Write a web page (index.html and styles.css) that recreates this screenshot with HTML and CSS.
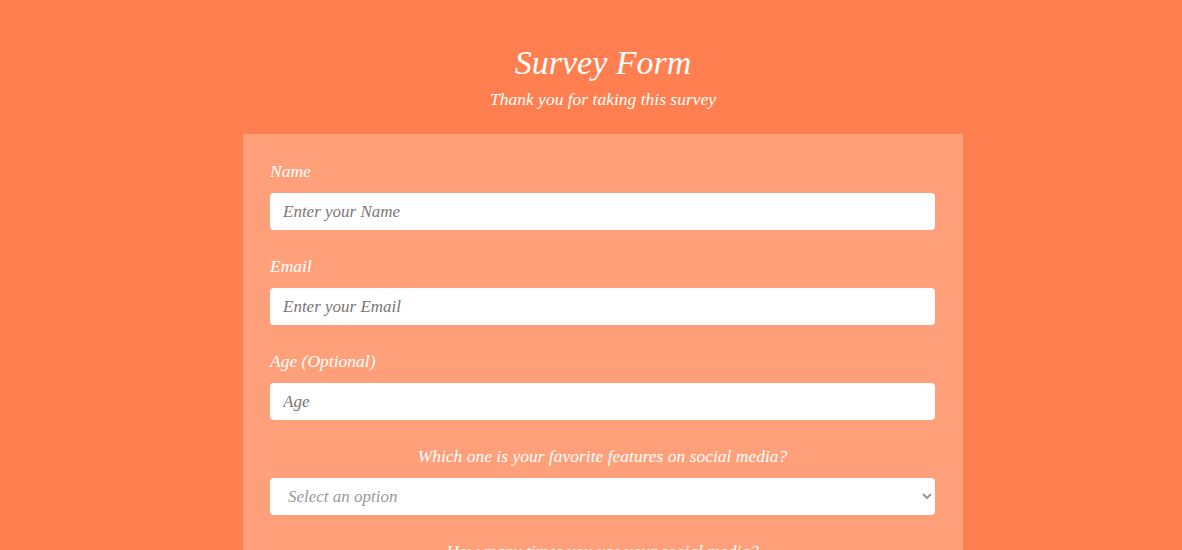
FILE: index.html
```html
<!DOCTYPE html>
<html>
<head>
    <meta charset="utf-8" />
    <link rel="stylesheet" href="styles.css">
</head>
<body>
<header class="head">
    <h1 id="title">Survey Form</h1>
    <p id="description">Thank you for taking this survey</p>
</header>
<form id="survey-form" class="form">
    <div class="group">
        <label for="name" class="label">Name</label>
        <input id="name" class="field" type="text" placeholder="Enter your Name" />
    </div>
    <div class="group">
        <label for="email" class="label">Email</label>
        <input id="email" class="field" type="email" placeholder="Enter your Email" />
    </div>
    <div class="group">
        <label for="number" class="label">Age (Optional)</label>
        <input id="number" class="field" type="number" placeholder="Age" />
    </div>
    <div class="group">
        <p class="label center">Which one is your favorite features on social media?</p>
        <select id="dropdown" class="field select">
            <option value="">Select an option</option>
            <option>Stories</option>
            <option>Reels</option>
            <option>Messages</option>
        </select>
    </div>
    <div class="group">
        <p class="label center">How many times you use your social media?</p>
    </div>
</form>
</body>
</html>
```

FILE: styles.css
```css
body{
    margin: 0;
    padding-left: 24px;
    background-color: #ff7f50;
    font-family: "Liberation Serif", "DejaVu Serif", serif;
    font-style: italic;
    color: white;
}
.head{
    text-align: center;
    padding-top: 41px;
}
#title{
    margin: 0;
    font-size: 34px;
    font-weight: normal;
    line-height: 44px;
}
#description{
    margin: 3px 0 0;
    font-size: 17.5px;
    line-height: 22px;
}
.form{
    width: 665px;
    margin: 24px auto 0;
    padding: 25px 28px 25px 27px;
    background-color: #ffa07a;
}
.group{
    margin-bottom: 24px;
}
.label{
    display: block;
    margin: 0 0 9px;
    font-size: 17.5px;
    line-height: 25px;
}
.center{
    text-align: center;
}
.field{
    display: block;
    box-sizing: border-box;
    width: 100%;
    height: 37px;
    padding: 0 13px;
    border: none;
    border-radius: 4px;
    background-color: white;
    font-family: inherit;
    font-style: italic;
    font-size: 17px;
    color: #555;
}
.field::placeholder{
    color: #777;
}
.select{
    padding-left: 14px;
    color: #999;
}
```
